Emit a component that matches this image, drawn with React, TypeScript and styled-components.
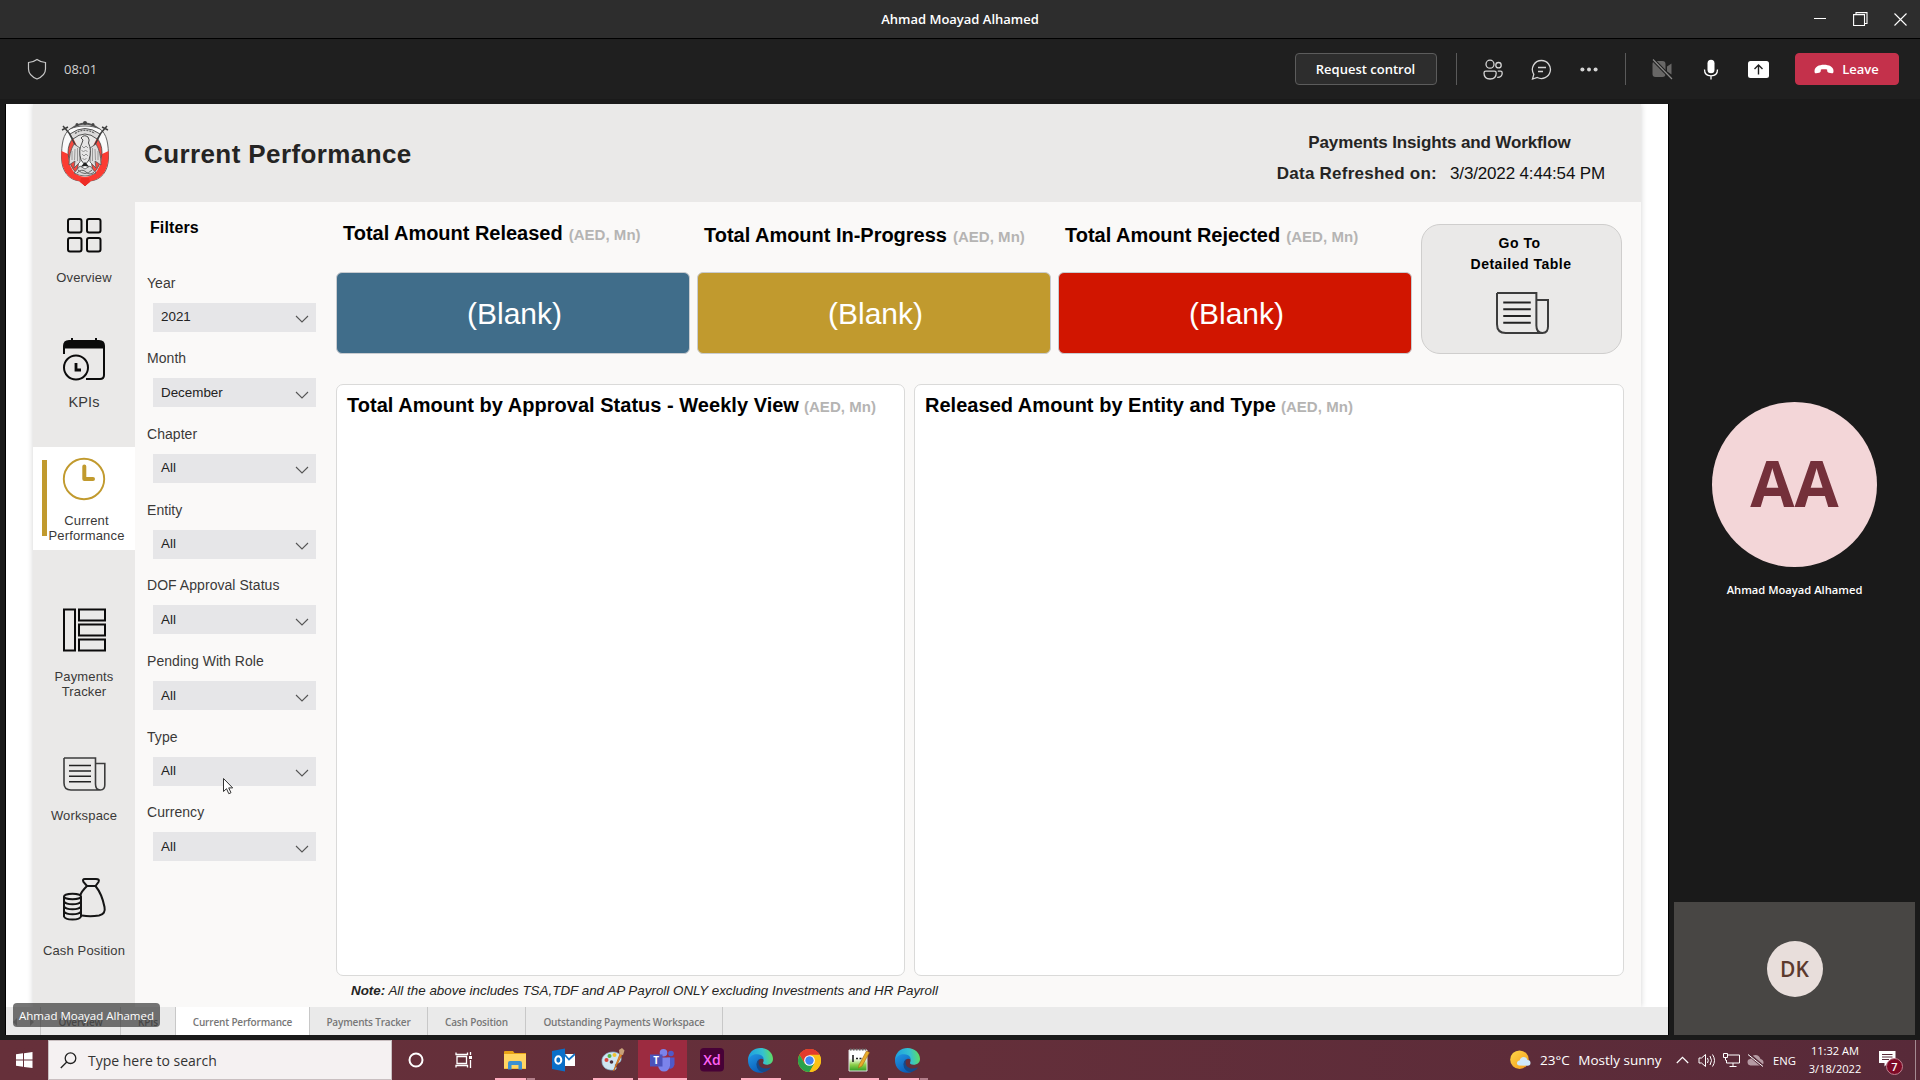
import React from "react";
import styled, { createGlobalStyle, css } from "styled-components";

const GlobalStyle = createGlobalStyle`
  * { box-sizing: border-box; }
  body { margin: 0; background: #1a1a1a; overflow: hidden; }
  svg { display: block; flex: none; }
`;

const arial = `"Liberation Sans", Arial, sans-serif`;
const segoe = `"Open Sans", "Segoe UI", sans-serif`;

const Desktop = styled.div`
  width: 1920px;
  height: 1080px;
  display: flex;
  flex-direction: column;
  background: #1a1a1a;
  font-family: ${segoe};
  white-space: nowrap;
`;

/* ---------- meeting window chrome ---------- */

const TitleBar = styled.header`
  height: 39px;
  flex: none;
  display: grid;
  grid-template-columns: 1fr auto 1fr;
  align-items: center;
  background: #2d2d2d;
  border-bottom: 1px solid #000;
  color: #fff;
  font-size: 13px;
  font-weight: 600;
`;
const WindowTitle = styled.span`grid-column: 2;`;
const WindowControls = styled.div`
  display: flex;
  justify-content: flex-end;
  align-items: center;
  gap: 26px;
  padding-right: 13px;
`;
const MeetingBar = styled.div`
  height: 60px;
  flex: none;
  display: flex;
  align-items: center;
  background: #1f1f1f;
  padding: 0 21px 0 27px;
  color: #e0e0e0;
`;
const Timer = styled.span`
  font-size: 13px;
  margin-left: 17px;
  color: #d0d0d0;
  flex: 1;
`;
const MeetingButton = styled.button<{ $leave?: boolean }>`
  height: 32px;
  width: ${p => (p.$leave ? 104 : 142)}px;
  display: flex;
  align-items: center;
  justify-content: center;
  gap: 8px;
  padding: 0 1px 0 0;
  border-radius: 4px;
  border: 1px solid ${p => (p.$leave ? "#c4314b" : "#5c5c5c")};
  background: ${p => (p.$leave ? "#c4314b" : "#2d2d2d")};
  color: #fff;
  font: 600 13px ${segoe};
`;
const BarDivider = styled.i`
  width: 1px;
  height: 32px;
  background: #5a5a5a;
`;
const ActionGroup = styled.div<{ $gap: number; $left: number; $right: number }>`
  display: flex;
  align-items: center;
  gap: ${p => p.$gap}px;
  margin: 0 ${p => p.$right}px 0 ${p => p.$left}px;
`;

const Stage = styled.main`
  flex: 1;
  display: flex;
  padding: 5px 5px 5px 5px;
`;
const SharedScreen = styled.section`
  position: relative;
  width: 1664px;
  display: flex;
  flex-direction: column;
  background: #fff;
  border: solid #000;
  border-width: 0 1px;
  font-family: ${arial};
`;

/* ---------- report ---------- */

const Report = styled.div`
  height: 903px;
  margin: 0 27px;
  display: flex;
  flex-direction: column;
  background: #faf9f8;
  box-shadow: 0 0 6px rgba(0, 0, 0, 0.18);
  clip-path: inset(0 -10px);
`;
const ReportHeader = styled.div`
  height: 98px;
  flex: none;
  display: flex;
  background: #eae9e8;
  color: #252423;
`;
const EmblemSlot = styled.div`
  width: 111px;
  padding: 16px 0 0 27px;
`;
const ReportTitle = styled.h1`
  margin: 0;
  flex: 1;
  font-size: 26px;
  line-height: 100px;
  letter-spacing: 0.4px;
`;
const ReportMeta = styled.div`
  display: flex;
  flex-direction: column;
  align-items: center;
  padding: 29px 36px 0 0;
  font-size: 17px;
  line-height: 20px;
  gap: 11px;
`;
const MetaTitle = styled.b`
  letter-spacing: -0.13px;
  padding-right: 3px;
`;
const MetaRow = styled.div`
  display: flex;
  gap: 13px;
  b { letter-spacing: 0.24px; }
  span { letter-spacing: -0.15px; color: #111; }
`;
const ReportBody = styled.div`
  flex: 1;
  display: flex;
`;
const Sidebar = styled.nav`
  width: 102px;
  display: flex;
  flex-direction: column;
  background: #eae9e8;
`;
const NavItem = styled.a<{ $height: number; $top: number; $gap: number; $active?: boolean; $size?: number }>`
  position: relative;
  height: ${p => p.$height}px;
  padding-top: ${p => p.$top}px;
  display: flex;
  flex-direction: column;
  align-items: center;
  gap: ${p => p.$gap}px;
  font-size: ${p => p.$size ?? 13}px;
  line-height: 15px;
  letter-spacing: 0.15px;
  text-align: center;
  color: #3a3938;
  ${p => p.$active && css`
    background: #fff;
    &::before {
      content: "";
      position: absolute;
      left: 9px;
      top: 13px;
      width: 5px;
      height: 76px;
      background: #c19a2e;
    }
    span { padding-left: 5px; }
  `}
`;
const Filters = styled.aside`
  width: 201px;
  padding: 14px 0 0 12px;
`;
const FiltersTitle = styled.h2`
  margin: 0 0 32.6px 3px;
  height: 24px;
  font-size: 16px;
  line-height: 24px;
  letter-spacing: 0.1px;
  color: #000;
`;
const Filter = styled.label`
  display: flex;
  flex-direction: column;
  height: 75.7px;
  font-size: 14px;
  line-height: 20px;
  letter-spacing: 0.05px;
  color: #3a3938;
`;
const Select = styled.div`
  width: 163px;
  height: 29px;
  margin: 10px 0 0 6px;
  padding: 0 7px 0 8px;
  display: flex;
  align-items: center;
  justify-content: space-between;
  background: #e6e6e8;
  color: #222;
  font-size: 13.4px;
  letter-spacing: 0;
`;
const Canvas = styled.div`
  flex: 1;
  display: flex;
  flex-direction: column;
`;
const SummaryRow = styled.div`
  height: 182px;
  display: flex;
  gap: 7px;
`;
const Kpi = styled.div`width: 354px;`;
const Heading = styled.h3<{ $top?: number }>`
  margin: 0;
  padding: ${p => p.$top ?? 0}px 0 0 7px;
  font-size: 20px;
  line-height: 24px;
  letter-spacing: -0.02px;
  color: #000;
  small {
    margin-left: 6px;
    font-size: 15px;
    letter-spacing: 0.04px;
    color: #b5b4b3;
  }
`;
const KpiHead = styled.div`height: 70px;`;
const KpiCard = styled.div<{ $color: string }>`
  height: 82px;
  display: flex;
  align-items: center;
  justify-content: center;
  padding: 1px 0 0 3px;
  border: 1px solid #c9ccd0;
  border-radius: 6px;
  background: ${p => p.$color};
  color: #fff;
  font-size: 30px;
`;
const DetailButton = styled.button`
  width: 201px;
  height: 130px;
  margin: 22px 0 0 2px;
  padding: 8px 0 0;
  display: flex;
  flex-direction: column;
  align-items: center;
  border: 1px solid #cfcecd;
  border-radius: 19px;
  background: #eae9e8;
  font: bold 14px/21px ${arial};
  letter-spacing: 0.5px;
  color: #000;
  span { padding-right: 4px; }
  span + span { padding-right: 1px; }
  svg { margin-top: 8px; }
`;
const PanelRow = styled.div`
  height: 592px;
  display: flex;
  gap: 9px;
`;
const Panel = styled.section<{ $width: number }>`
  width: ${p => p.$width}px;
  padding: 8px 3px;
  border: 1.5px solid #dadad9;
  border-radius: 7px;
  background: #fff;
  ${Heading} { letter-spacing: 0.025px; }
  small { margin-left: 5px; }
`;
const Note = styled.p`
  margin: 0;
  padding: 5px 0 0 15px;
  font-size: 13.4px;
  line-height: 20px;
  font-style: italic;
  color: #252423;
`;

const PageTabs = styled.div`
  flex: 1;
  display: flex;
  background: #eaeaea;
  font-family: ${segoe};
`;
const PageTab = styled.div<{ $width: number; $active?: boolean }>`
  width: ${p => p.$width}px;
  display: flex;
  align-items: center;
  justify-content: center;
  padding-top: 2px;
  border-right: 1px solid #c8c8c8;
  background: ${p => (p.$active ? "#fff" : "transparent")};
  color: #777;
  font-size: 10px;
  font-weight: 600;
  letter-spacing: -0.17px;
`;
const PresenterTag = styled.div`
  position: absolute;
  left: 7px;
  bottom: 8px;
  width: 147px;
  height: 24px;
  border-radius: 4px;
  background: rgba(45, 45, 45, 0.66);
  color: #fff;
  font: 500 11.5px/25px ${segoe};
  text-align: center;
`;
const Cursor = styled.svg`
  position: absolute;
  left: 216px;
  top: 673px;
`;

/* ---------- participants ---------- */

const Participants = styled.aside`
  flex: 1;
  display: flex;
  flex-direction: column;
  margin-left: 5px;
`;
const Speaker = styled.div`
  height: 798px;
  display: flex;
  flex-direction: column;
  align-items: center;
  padding-top: 298px;
  gap: 14px;
  color: #fff;
  font-size: 11.2px;
  font-weight: 600;
  line-height: 18px;
`;
const Avatar = styled.div<{ $size: number; $bg: string; $fg: string; $font: number; $bold?: boolean }>`
  width: ${p => p.$size}px;
  height: ${p => p.$size}px;
  border-radius: 50%;
  background: ${p => p.$bg};
  color: ${p => p.$fg};
  font-size: ${p => p.$font}px;
  font-weight: ${p => (p.$bold ? 700 : 600)};
  line-height: ${p => p.$size - (p.$bold ? 3 : 0)}px;
  text-align: center;
`;
const SelfTile = styled.div`
  flex: 1;
  display: flex;
  align-items: center;
  justify-content: center;
  background: #484644;
`;

/* ---------- taskbar ---------- */

const Taskbar = styled.footer`
  height: 40px;
  flex: none;
  display: flex;
  background: linear-gradient(90deg, #66303a, #642f3a 50%, #582a39);
  color: #fff;
`;
const StartButton = styled.div`
  width: 48px;
  display: flex;
  align-items: center;
  justify-content: center;
`;
const SearchBox = styled.div`
  width: 344px;
  display: flex;
  align-items: center;
  gap: 11px;
  padding-left: 11px;
  border: 1px solid #c9bfc1;
  background: #f5f1f2;
  color: #333;
  font-size: 14px;
`;
const AppTile = styled.div<{ $active?: boolean; $width?: number }>`
  width: ${p => p.$width ?? 49}px;
  display: flex;
  flex-direction: column;
  align-items: center;
  background: ${p => (p.$active ? "#9c2b40" : "transparent")};
`;
const AppIcon = styled.div`
  height: 38px;
  padding-top: 2px;
  display: flex;
  align-items: center;
`;
const Running = styled.i<{ $kind: "one" | "full" | "many" }>`
  height: 2px;
  width: ${p => (p.$kind === "full" ? 49 : 40)}px;
  background: ${p =>
    p.$kind === "many" ? "linear-gradient(90deg, #ffaec0 31px, #7d4650 31px, #7d4650 32px, #b37e8a 32px)" : "#ffaec0"};
`;
const Tray = styled.div`
  flex: 1;
  display: flex;
  align-items: center;
  justify-content: flex-end;
`;
const TrayText = styled.span<{ $size: number; $right: number }>`
  font-size: ${p => p.$size}px;
  margin-right: ${p => p.$right}px;
`;
const TrayIcons = styled.div`
  display: flex;
  align-items: center;
  gap: 7px;
  margin-right: 9px;
`;
const Clock = styled.div`
  width: 56px;
  margin-right: 16px;
  font-size: 11.1px;
  line-height: 18px;
  text-align: center;
`;
const Notifications = styled.div`
  position: relative;
  width: 24px;
  height: 28px;
  margin-right: 12px;
  padding-top: 5px;
`;
const Badge = styled.span`
  position: absolute;
  right: 0;
  bottom: -1px;
  width: 17px;
  height: 17px;
  border-radius: 50%;
  border: 1px solid #c08090;
  background: #7e0a26;
  font-size: 11px;
  font-weight: 600;
  line-height: 15px;
  text-align: center;
`;
const ShowDesktop = styled.i`
  width: 5px;
  height: 40px;
  border-left: 1px solid #a58a92;
`;

/* ---------- drawings ---------- */

const Emblem = () => (
  <svg width="50" height="66" viewBox="0 0 50 66">
    <path d="M10 10 Q25 -3 40 10" stroke="#555" strokeWidth="2" fill="none" />
    <g fill="#444"><circle cx="25" cy="3" r="2" /><circle cx="17" cy="4.500" r="1.500" /><circle cx="33" cy="4.500" r="1.500" /></g>
    <path d="M10 9 C3 14 1.500 24 1.500 38 C2 52 9 60 20 61 L25 66 L30 61 C41 60 48 52 48.500 38 C48.500 24 47 14 40 9 C32 5 18 5 10 9Z" fill="#fafafa" stroke="#555" strokeWidth="0.9" />
    <path d="M1.500 31 L8 34 Q9 48 16 54 Q25 60 34 54 Q41 48 42 34 L48.500 31 C49.500 50 42 59 31 61 L25 66 L19 61 C8 59 .5 50 1.500 31Z" fill="#fb3b32" />
    <path d="M8 33 Q8 23 14 17 L20 31 L17 54 Q9 46 8 33Z M42 33 Q42 23 36 17 L30 31 L33 54 Q41 46 42 33Z" fill="#f5483f" stroke="#444" strokeWidth=".8" />
    <path d="M13 18 Q25 8 37 18 L30 32 H20Z" fill="#eae9e8" />
    <path d="M10 14 Q25 3 40 14 L37 19 Q25 9 13 19Z" fill="#dcdbdb" stroke="#444" strokeWidth=".9" />
    <path d="M15 13.500 Q25 7 35 13.500" stroke="#666" strokeWidth="1.300" strokeDasharray="2 1" fill="none" />
    <path d="M3 6 L9 13 L19 32 M47 6 L41 13 L31 32 M2 10 L8 7 M48 10 L42 7" stroke="#3d3d3d" strokeWidth="1.500" fill="none" />
    <path d="M14 24 Q9 32 9 45 L15 41 L14 48 L20 42 L20 28Z M36 24 Q41 32 41 45 L35 41 L36 48 L30 42 L30 28Z" fill="#dedddd" stroke="#555" strokeWidth=".8" />
    <path d="M12 31v9M15 29l-.5 11M17.500 28v13M38 31v9M35 29l.5 11M32.500 28v13" stroke="#888" strokeWidth=".8" />
    <path d="M21 18 Q24 14 28 17 Q30 20 28.500 23 Q32 30 29 40 L25 45 L21 40 Q18 30 22 23 L23 20Z" fill="#e6e5e5" stroke="#4a4a4a" strokeWidth="1" />
    <path d="M22 26l2 2 2-2 2 2M21.500 30l2 2 2-2 2 2M22 34l2 2 2-2 2 2M22.500 38l2 2 2-2" stroke="#888" strokeWidth=".9" fill="none" />
    <path d="M25 42 L20.500 47 L25 46 L29.500 47Z" fill="#222" />
    <path d="M14 53 L20 46 L25 49 L30 46 L36 53 Q25 59 14 53Z" fill="#dad9d9" stroke="#555" strokeWidth=".8" />
    <path d="M17 53 Q22 48 26 52 T34 52 M18 50 Q25 57 32 50" stroke="#666" strokeWidth="1" fill="none" />
    <path d="M21 58h8l1 4-5 4-5-4z" fill="#ef2c25" />
  </svg>
);
const OverviewIcon = () => (
  <svg width="48" height="48" fill="none" stroke="#0b0b0b" strokeWidth="2">
    {[[8, 8], [27, 8], [8, 27], [27, 27]].map(([x, y]) => <rect key={`${x}${y}`} x={x} y={y} width="13.500" height="13.500" rx="2" />)}
  </svg>
);
const KpiIcon = () => (
  <svg width="48" height="48" fill="none" stroke="#0b0b0b" strokeWidth="2">
    <path d="M3 13.500 V11 Q3 5 9 5 H39 Q45 5 45 11 V13.500Z" fill="#0b0b0b" stroke="none" />
    <path d="M12 3v4M36 3v4M4 12v7M44 12v28q0 4-4 4H26" />
    <circle cx="16" cy="32.500" r="12" />
    <path d="M16 28v7h5" strokeWidth="2.800" />
  </svg>
);
const ClockIcon = () => (
  <svg width="48" height="48" fill="none" stroke="#c19a2e">
    <circle cx="24" cy="24" r="20.200" strokeWidth="1.900" />
    <path d="M24.300 11.500V24H33" strokeWidth="4" strokeLinecap="round" strokeLinejoin="round" />
  </svg>
);
const TrackerIcon = () => (
  <svg width="48" height="48" fill="none" stroke="#0b0b0b" strokeWidth="2">
    <path d="M4 3.500h11v41H4zM19 3.500h26v11H19zM19 18.500h26v11H19zM19 33.500h26v11H19z" />
  </svg>
);
const NewsIcon = ({ size = 48 }: { size?: number }) => (
  <svg width={size} height={size} viewBox="0 0 48 48" fill="none" stroke="#3c3c3c" strokeWidth="1.600">
    <path d="M4 8h31.500v26q0 6 4.800 6t4.500-6V13.500h-9.300M4 8v25q0 7 7 7h29.500" />
    <path d="M9 15.500h22M9 21h22M9 26.300h22M9 31.800h22" stroke="#222" />
  </svg>
);
const CashIcon = () => (
  <svg width="48" height="48" fill="none" stroke="#151515" strokeWidth="2">
    <path d="M27 11 L23.500 7 Q22 4 25 4 H36 Q40 4 38.500 7 L35.500 11Z M27 11 Q21 17 20.500 20 M35.500 11 Q42 19 44.500 32 Q46 39 39 40.500 Q30 42 22 40.500" />
    <ellipse cx="12.500" cy="21.500" rx="8.500" ry="2.800" />
    <path d="M4 21.500V41.500Q5 44.500 12.500 44.500T21 41.500V21.500M4 26.500q2 2.800 8.500 2.800t8.500-2.800M4 31.500q2 2.800 8.500 2.800t8.500-2.800M4 36.500q2 2.800 8.500 2.800t8.500-2.800" />
  </svg>
);
const ChevronMark = styled.svg`margin-top: 4px;`;
const Chevron = () => (
  <ChevronMark width="14" height="10" fill="none" stroke="#555" strokeWidth="1.100">
    <path d="M1 2l6 6 6-6" />
  </ChevronMark>
);
const EdgeIcon = () => (
  <svg width="25" height="25" viewBox="0 0 24 24">
    <defs>
      <linearGradient id="edgeTop" x1="0" x2="1" y1=".4" y2=".3"><stop offset="0" stopColor="#1d9fe0" /><stop offset=".6" stopColor="#35c1d0" /><stop offset="1" stopColor="#62e05a" /></linearGradient>
      <linearGradient id="edgeSide" x1="0" x2=".6" y1="0" y2="1"><stop offset="0" stopColor="#2196e3" /><stop offset="1" stopColor="#0a5cb8" /></linearGradient>
    </defs>
    <path d="M0 12 C0 4 6 0 12 0 C19 0 24 5 24 10.500 C24 14 21 16 18 16 C15 16 14 15 14.500 14 C16 11 14 8 10 8 C5 8 1 11 0 12Z" fill="url(#edgeTop)" />
    <path d="M0 12 C1 8 5 5.500 9 6 C14 6.500 15 9 15 11 C12 9 8 12 8.500 16 C9 21 15 24 18 22 C9 27 0 21 0 12Z" fill="url(#edgeSide)" />
    <path d="M8.500 14 C7 20 12 24 16 23 C19 22 21 20.500 22 18.500 C18 20.500 13 20 11 17 C9.500 14.500 10 12 11.500 10.500 C10 11 9 12 8.500 14Z" fill="#134a8c" />
  </svg>
);

const appIcons: Record<string, React.ReactNode> = {
  cortana: <svg width="18" height="16" fill="none"><circle cx="8" cy="8" r="6.500" stroke="#fff" strokeWidth="2" /></svg>,
  taskView: (
    <svg width="21" height="16" fill="none" stroke="#fff" strokeWidth="1.300">
      <path d="M2 4.500h9.500v7H2zM1 .5v2h11.500v-2M1 15.500v-2h11.500v2M15.500 0v3M15.500 8v8" /><path d="M14 4h3v3h-3z" fill="#fff" stroke="none" />
    </svg>
  ),
  explorer: (
    <svg width="22" height="19"><path d="M0 1q0-1 1-1h8l1.500 2H22v16H0z" fill="#e8a317" /><path d="M0 3h22v14.500H0z" fill="#ffd562" /><path d="M4 18.500V12q0-2 2-2h10q2 0 2 2v6.500h-3.500V14h-7v4.500z" fill="#3c91d2" /></svg>
  ),
  outlook: (
    <svg width="23" height="24"><path d="M11 6h12v12H11z" fill="#fff" /><path d="M12.500 6.500l4.500 5L23 6" fill="none" stroke="#1173c8" strokeWidth="1.800" /><path d="M0 3L13 .5v23L0 21z" fill="#0a6fc9" /><ellipse cx="6.300" cy="12" rx="3" ry="3.700" fill="none" stroke="#fff" strokeWidth="2" /></svg>
  ),
  paint: (
    <svg width="24" height="24"><path d="M1 14C0 8 6 4 12 4s9 4 8 8-6 3-6 5 2 2 1 4-9 1-11-1-3-4-3-6z" fill="#cfe6f2" stroke="#87b4cc" strokeWidth=".7" /><circle cx="5.500" cy="12" r="2" fill="#d8463c" /><circle cx="8.500" cy="8" r="2" fill="#56b447" /><circle cx="13.500" cy="7" r="2" fill="#f1c232" /><circle cx="10.500" cy="14" r="1.800" fill="#4a2f3c" /><path d="M12.500 23L19 6l2 .8z" fill="#e98b2b" stroke="#c66a14" strokeWidth=".8" /><path d="M18.500 6.500L18 2l3-2 2.500 2.500L22 7z" fill="#c8a178" /></svg>
  ),
  teams: (
    <svg width="25" height="23"><circle cx="21" cy="4.500" r="2.800" fill="#5059c9" /><circle cx="13.500" cy="3.800" r="3.800" fill="#7b83eb" /><path d="M17 8.500h7.500v7q-1 4-5 4.500z" fill="#5059c9" /><path d="M8 8.500h12v8q-1 6-6 6t-6-6z" fill="#7b83eb" /><path d="M0 5.500h12.500v12H0z" fill="#4b53bc" /><text x="6.250" y="15" textAnchor="middle" fill="#fff" fontFamily="Open Sans, sans-serif" fontWeight="700" fontSize="10">T</text></svg>
  ),
  xd: (
    <svg width="24" height="24"><rect width="24" height="23.500" rx="4" fill="#470137" /><text x="12" y="17" textAnchor="middle" fill="#ff61f6" fontFamily="Open Sans, sans-serif" fontWeight="600" fontSize="14">Xd</text></svg>
  ),
  edge: <EdgeIcon />,
  chrome: (
    <svg width="23" height="23" viewBox="0 0 24 24"><circle cx="12" cy="12" r="12" fill="#fbc116" /><path d="M12 12L1.600 6A12 12 0 0 1 22.400 6z" fill="#e33b2e" /><path d="M12 6h10.400A12 12 0 0 0 1.600 6L7 15z" fill="#e33b2e" /><path d="M1.600 6L7 15l5 3-2 5.900A12 12 0 0 1 1.600 6z" fill="#2ba24c" /><path d="M12 24l5-9H7l4 3-1.200 5.900z" fill="#2ba24c" /><path d="M12 24A12 12 0 0 0 22.400 6H12l5.200 9z" fill="#fbc116" /><circle cx="12" cy="12" r="5.600" fill="#fff" /><circle cx="12" cy="12" r="4.400" fill="#4285f4" /></svg>
  ),
  notepad: (
    <svg width="22" height="24"><defs><linearGradient id="pad" x1="0" x2="0" y1="0" y2="1"><stop offset=".4" stopColor="#fff" /><stop offset=".7" stopColor="#8ed04b" /><stop offset="1" stopColor="#2e9c22" /></linearGradient></defs><path d="M1 2h18v21H1z" fill="url(#pad)" stroke="#ddd" /><path d="M2 1.500h16" stroke="#666" strokeWidth="2" strokeDasharray="1.500 1.500" /><path d="M5 7v7M8 10.500h2M11.500 10.500h2" stroke="#222" strokeWidth="1.600" /><path d="M11 17L18.500 3l3 1.500L14 18l-3.500 2z" fill="#e8ac2c" stroke="#a36a12" strokeWidth=".6" /></svg>
  ),
};

/* ---------- data ---------- */

const filters = [
  ["Year", "2021"], ["Month", "December"], ["Chapter", "All"], ["Entity", "All"],
  ["DOF Approval Status", "All"], ["Pending With Role", "All"], ["Type", "All"], ["Currency", "All"],
];
const kpis = [
  { title: "Total Amount Released", color: "#406d8a", top: 19 },
  { title: "Total Amount In-Progress", color: "#c19a2e", top: 21 },
  { title: "Total Amount Rejected", color: "#d11500", top: 21 },
];
const taskApps: { icon: string; width?: number; running?: "one" | "full" | "many" }[] = [
  { icon: "cortana" }, { icon: "taskView" }, { icon: "explorer", running: "many" }, { icon: "outlook" },
  { icon: "paint", running: "one", width: 50 }, { icon: "teams", running: "full" }, { icon: "xd" }, { icon: "edge", running: "one" },
  { icon: "chrome" }, { icon: "notepad", running: "one" }, { icon: "edge", running: "many" },
];
const unit = "(AED, Mn)";

export default function App() {
  return (
    <Desktop>
      <GlobalStyle />
      <TitleBar>
        <WindowTitle>Ahmad Moayad Alhamed</WindowTitle>
        <WindowControls>
          <svg width="13" height="14"><path d="M0 6.500h12" stroke="#fff" /></svg>
          <svg width="15" height="14" fill="none" stroke="#fff" strokeWidth="1.100"><path d="M.6 2.600h10.900v10.900H.6zM3 2.500V.6h11v10.900h-2.500" /></svg>
          <svg width="13" height="13"><path d="M.5.5l12 12M12.500.5l-12 12" stroke="#fff" strokeWidth="1.100" /></svg>
        </WindowControls>
      </TitleBar>

      <MeetingBar>
        <svg width="20" height="22" fill="none" stroke="#c8c8c8" strokeWidth="1.200"><path d="M10 1.500q4 2.900 8.500 3v6.500q0 6.500-8.500 10Q1.500 17.500 1.500 11V4.500q4.500-.1 8.500-3z" /></svg>
        <Timer>08:01</Timer>
        <MeetingButton>Request control</MeetingButton>
        <ActionGroup $gap={0} $left={19} $right={26}><BarDivider /></ActionGroup>
        <ActionGroup $gap={28} $left={0} $right={27}>
          <svg width="20" height="21" fill="none" stroke="#d5d5d5" strokeWidth="1.300"><circle cx="7" cy="5.200" r="4" /><circle cx="15.500" cy="6.200" r="2.700" /><path d="M1 14q0-1.800 1.800-1.800h8.600q1.800 0 1.800 1.800 0 6-6.100 6T1 14zM14.800 12.200h2.700q1.700 0 1.700 1.700 0 4.600-5 4.400" /></svg>
          <svg width="21" height="21" fill="none" stroke="#d5d5d5" strokeWidth="1.300"><path d="M10.500 1.500a9 9 0 1 1-4.200 17L1.500 20l1.300-4.700A9 9 0 0 1 10.500 1.500zM7 8.500h8M7 12.500h5" /></svg>
          <svg width="18" height="5" fill="#d5d5d5"><circle cx="2.400" cy="2.500" r="2" /><circle cx="9" cy="2.500" r="2" /><circle cx="15.600" cy="2.500" r="2" /></svg>
        </ActionGroup>
        <BarDivider />
        <ActionGroup $gap={29.5} $left={26} $right={26}>
          <svg width="21" height="21"><path d="M.5 5q0-3 3-3h7q3 0 3 3v10q0 3-3 3h-7q-3 0-3-3zM15 7.500l4.500-3v11l-4.500-3z" fill="#686766" /><path d="M1 .5l19 19.500" stroke="#1f1f1f" strokeWidth="3.400" /><path d="M1 .5l19 19.500" stroke="#8a8988" strokeWidth="1.200" /></svg>
          <svg width="16" height="21" fill="none" stroke="#fff" strokeWidth="1.300"><rect x="4.500" y=".8" width="7" height="13.500" rx="3.500" fill="#fff" stroke="none" /><path d="M1.500 10.500q0 6.300 6.500 6.300t6.500-6.300M8 17v3.500" /></svg>
          <svg width="21" height="17"><rect width="21" height="17" rx="2.500" fill="#fff" /><path d="M10.500 13.500v-9M6.500 8l4-4 4 4" stroke="#1f1f1f" strokeWidth="1.400" fill="none" /></svg>
        </ActionGroup>
        <MeetingButton $leave>
          <svg width="20" height="11"><path d="M10 .8c5 0 9.500 2 9.500 6.200 0 1.500-.4 2.500-1.700 2.300l-3-.6c-1.600-.3-1.500-1.200-1.700-3.200C11.300 5 8.700 5 6.900 5.500c-.2 2-.1 2.900-1.700 3.200l-3 .6C.9 9.500.5 8.500.5 7 .5 2.800 5 .8 10 .8z" fill="#fff" /></svg>
          Leave
        </MeetingButton>
      </MeetingBar>

      <Stage>
        <SharedScreen>
          <Report>
            <ReportHeader>
              <EmblemSlot><Emblem /></EmblemSlot>
              <ReportTitle>Current Performance</ReportTitle>
              <ReportMeta>
                <MetaTitle>Payments Insights and Workflow</MetaTitle>
                <MetaRow><b>Data Refreshed on:</b><span>3/3/2022 4:44:54 PM</span></MetaRow>
              </ReportMeta>
            </ReportHeader>
            <ReportBody>
              <Sidebar>
                <NavItem $height={120} $top={9} $gap={11}><OverviewIcon /><span>Overview</span></NavItem>
                <NavItem $height={125} $top={13} $gap={12} $size={14.5}><KpiIcon /><span>KPIs</span></NavItem>
                <NavItem $height={103} $top={7.5} $gap={10.5} $active><ClockIcon /><span>Current<br />Performance</span></NavItem>
                <NavItem $height={180} $top={56} $gap={14.5}><TrackerIcon /><span>Payments<br />Tracker</span></NavItem>
                <NavItem $height={120} $top={20} $gap={10}><NewsIcon /><span>Workspace</span></NavItem>
                <NavItem $height={157} $top={24.5} $gap={20}><CashIcon /><span>Cash Position</span></NavItem>
              </Sidebar>
              <Filters>
                <FiltersTitle>Filters</FiltersTitle>
                {filters.map(([label, value]) => (
                  <Filter key={label}>{label}<Select>{value}<Chevron /></Select></Filter>
                ))}
              </Filters>
              <Canvas>
                <SummaryRow>
                  {kpis.map(k => (
                    <Kpi key={k.title}>
                      <KpiHead><Heading $top={k.top}>{k.title}<small>{unit}</small></Heading></KpiHead>
                      <KpiCard $color={k.color}>(Blank)</KpiCard>
                    </Kpi>
                  ))}
                  <DetailButton><span>Go To</span><span>Detailed Table</span><NewsIcon size={60} /></DetailButton>
                </SummaryRow>
                <PanelRow>
                  <Panel $width={569}><Heading>Total Amount by Approval Status - Weekly View<small>{unit}</small></Heading></Panel>
                  <Panel $width={710}><Heading>Released Amount by Entity and Type<small>{unit}</small></Heading></Panel>
                </PanelRow>
                <Note><b>Note:</b> All the above includes TSA,TDF and AP Payroll ONLY excluding Investments and HR Payroll</Note>
              </Canvas>
            </ReportBody>
          </Report>
          <PageTabs>
            <PageTab $width={35}><svg width="24" height="8" fill="#aaa"><path d="M6 0v8L2 4zM19 0v8l4-4z" /></svg></PageTab>
            <PageTab $width={80}>Overview</PageTab>
            <PageTab $width={55}>KPIs</PageTab>
            <PageTab $width={134} $active>Current Performance</PageTab>
            <PageTab $width={118}>Payments Tracker</PageTab>
            <PageTab $width={98}>Cash Position</PageTab>
            <PageTab $width={197}>Outstanding Payments Workspace</PageTab>
          </PageTabs>
          <PresenterTag>Ahmad Moayad Alhamed</PresenterTag>
          <Cursor width="13" height="19"><path d="M1.500 1.500v13l3-2.800 2.300 5 2.200-1-2.300-4.800h4z" fill="#fff" stroke="#333" /></Cursor>
        </SharedScreen>
        <Participants>
          <Speaker>
            <Avatar $size={165} $bg="#f3d6d8" $fg="#74303a" $font={64} $bold>AA</Avatar>
            Ahmad Moayad Alhamed
          </Speaker>
          <SelfTile><Avatar $size={56} $bg="#e8dedb" $fg="#5c3a2e" $font={21}>DK</Avatar></SelfTile>
        </Participants>
      </Stage>

      <Taskbar>
        <StartButton><svg width="17" height="16" fill="#fff"><path d="M0 2.300L7 1.300v6.300H0zM8 1.200L16.500 0v7.600H8zM0 8.500h7v6.300l-7-1zM8 8.500h8.500V16L8 14.900z" /></svg></StartButton>
        <SearchBox>
          <svg width="17" height="17" fill="none" stroke="#222" strokeWidth="1.300"><circle cx="10.500" cy="6.200" r="5.300" /><path d="M6.800 10L.8 16" /></svg>
          Type here to search
        </SearchBox>
        {taskApps.map((app, i) => (
          <AppTile key={i} $active={app.running === "full"} $width={app.width}>
            <AppIcon>{appIcons[app.icon]}</AppIcon>
            {app.running && <Running $kind={app.running} />}
          </AppTile>
        ))}
        <Tray>
          <svg width="30" height="20"><defs><linearGradient id="sun" x1="0" x2="1" y1="0" y2="1"><stop stopColor="#ffd84a" /><stop offset="1" stopColor="#f59a1b" /></linearGradient></defs><circle cx="9.500" cy="9.700" r="9.300" fill="url(#sun)" /><path d="M9 15.500q-2.500-.5-2-3 .5-2 2.600-2 .9-3.500 4-3.500t3.900 3q3 .2 3 3t-3 2.700z" fill="#cfe9fa" /></svg>
          <TrayText $size={13.5} $right={8.5}>23°C</TrayText>
          <TrayText $size={13.5} $right={14.5}>Mostly sunny</TrayText>
          <TrayIcons>
            <svg width="15" height="8" fill="none" stroke="#fff" strokeWidth="1.200"><path d="M.8 7l5.700-5.700L12.200 7" /></svg>
            <svg width="18" height="15" fill="none" stroke="#fff"><path d="M1 5h2.500L7.500 1.500v12L3.500 10H1zM9.500 5q1.500 2.500 0 5M12 3q3 4.500 0 9M14.500 1.500q4 6 0 12" /></svg>
            <svg width="17" height="14" fill="none" stroke="#fff"><path d="M5 2h11.500v8H3.500V7M10 10v3M6.500 13.500h7M.5.5h4v4h-4zM2.500 4.500v3" /></svg>
            <svg width="17" height="13"><path d="M3.500 11.500q-3-.5-3-3.500t3-3q1.500-4 5-4t5 4q3 .5 3 3.500t-3 3z" fill="#b59aa3" /><path d="M1.500 0l14.500 12.500" stroke="#582a39" strokeWidth="3" /><path d="M1 .5l15 12" stroke="#fff" /></svg>
          </TrayIcons>
          <TrayText $size={11.3} $right={11}>ENG</TrayText>
          <Clock>11:32 AM<br />3/18/2022</Clock>
          <Notifications>
            <svg width="17" height="16"><path d="M0 0h16.500v12H9l-3.500 3.500V12H0z" fill="#fff" /><path d="M3 3.500h10.500M3 6h10.500M3 8.500h7" stroke="#582a39" /></svg>
            <Badge>7</Badge>
          </Notifications>
          <ShowDesktop />
        </Tray>
      </Taskbar>
    </Desktop>
  );
}
